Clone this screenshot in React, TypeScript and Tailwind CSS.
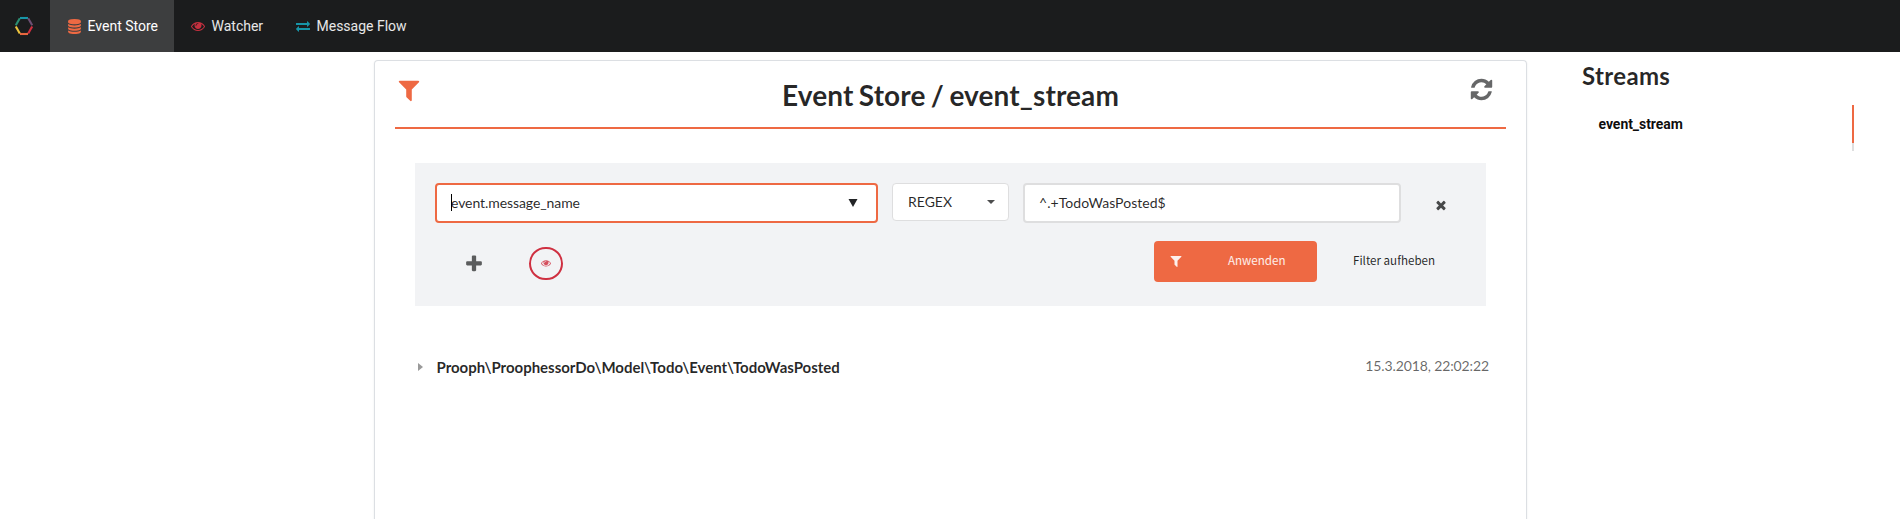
import React from "react";

const PATHS = {
  filter:
    "M1595 295q17 41-14 70l-493 493v742q0 42-39 59-13 5-25 5-27 0-45-19l-256-256q-19-19-19-45v-486l-493-493q-31-29-14-70 17-39 59-39h1280q42 0 59 39z",
  refresh:
    "M1639 1056q0 5-1 7-64 268-268 434.5t-478 166.5q-146 0-282.5-55t-243.5-157l-129 129q-19 19-45 19t-45-19-19-45v-448q0-26 19-45t45-19h448q26 0 45 19t19 45-19 45l-137 137q71 66 161 102t187 36q134 0 250-65t186-179q11-17 53-117 8-23 30-23h192q13 0 22.5 9.5t9.5 22.5zm25-800v448q0 26-19 45t-45 19h-448q-26 0-45-19t-19-45 19-45l138-138q-148-137-349-137-134 0-250 65t-186 179q-11 17-53 117-8 23-30 23h-199q-13 0-22.5-9.5t-9.5-22.5v-7q65-268 270-434.5t480-166.5q146 0 284 55.5t245 156.5l130-129q19-19 45-19t45 19 19 45z",
  plus:
    "M1600 736v192q0 40-28 68t-68 28h-416v416q0 40-28 68t-68 28h-192q-40 0-68-28t-28-68v-416h-416q-40 0-68-28t-28-68v-192q0-40 28-68t68-28h416v-416q0-40 28-68t68-28h192q40 0 68 28t28 68v416h416q40 0 68 28t28 68z",
  times:
    "M1490 1322q0 40-28 68l-136 136q-28 28-68 28t-68-28l-294-294-294 294q-28 28-68 28t-68-28l-136-136q-28-28-28-68t28-68l294-294-294-294q-28-28-28-68t28-68l136-136q28-28 68-28t68 28l294 294 294-294q28-28 68-28t68 28l136 136q28 28 28 68t-28 68l-294 294 294 294q28 28 28 68z",
  eye:
    "M1664 960q-152-236-381-353 61 104 61 225 0 185-131.5 316.5t-316.5 131.5-316.5-131.5-131.5-316.5q0-121 61-225-229 117-381 353 133 205 333.5 326.5t434.5 121.5 434.5-121.5 333.5-326.5zm-720-384q0-20-14-34t-34-14q-125 0-214.5 89.5t-89.5 214.5q0 20 14 34t34 14 34-14 14-34q0-86 61-147t147-61q20 0 34-14t14-34zm848 384q0 34-20 69-140 230-376.5 368.5t-499.5 138.5-499.5-139-376.5-368q-20-35-20-69t20-69q140-229 376.5-368t499.5-139 499.5 139 376.5 368q20 35 20 69z",
  database:
    "M896 768q237 0 443-43t325-127v170q0 69-103 128t-280 93.5-385 34.5-385-34.5-280-93.5-103-128v-170q119 84 325 127t443 43zm0 768q237 0 443-43t325-127v170q0 69-103 128t-280 93.5-385 34.5-385-34.5-280-93.5-103-128v-170q119 84 325 127t443 43zm0-384q237 0 443-43t325-127v170q0 69-103 128t-280 93.5-385 34.5-385-34.5-280-93.5-103-128v-170q119 84 325 127t443 43zm0-1152q208 0 385 34.5t280 93.5 103 128v128q0 69-103 128t-280 93.5-385 34.5-385-34.5-280-93.5-103-128v-128q0-69 103-128t280-93.5 385-34.5z",
  exchange:
    "M1792 1184v192q0 13-9.5 22.5t-22.5 9.5h-1376v192q0 13-9.5 22.5t-22.5 9.5q-12 0-24-10l-319-320q-9-9-9-22 0-14 9-23l320-320q9-9 23-9 13 0 22.5 9.5t9.5 22.5v192h1376q13 0 22.5 9.5t9.5 22.5zm0-544q0 14-9 23l-320 320q-9 9-23 9-13 0-22.5-9.5t-9.5-22.5v-192h-1376q-13 0-22.5-9.5t-9.5-22.5v-192q0-13 9.5-22.5t22.5-9.5h1376v-192q0-14 9-23t23-9q12 0 24 10l319 319q9 9 9 23z",
};

function Icon({ name, className }: { name: keyof typeof PATHS; className: string }) {
  return (
    <svg viewBox="0 0 1792 1792" fill="currentColor" className={`shrink-0 ${className}`}>
      <path d={PATHS[name]} />
    </svg>
  );
}

function Logo() {
  return (
    <svg viewBox="0 0 20 20" className="size-5" fill="none" strokeWidth="2.1">
      <path d="M6 2h8" stroke="#1795a8" />
      <path d="M14.2 2.2l4 7.1" stroke="#6d4f74" />
      <path d="M18.2 10.5l-4 7" stroke="#cf2f40" />
      <path d="M14 18H6" stroke="#e8663f" />
      <path d="M5.8 17.5l-4-7" stroke="#eec53f" />
      <path d="M1.8 9.3l4-7.1" stroke="#2b8f74" />
    </svg>
  );
}

function NavBar() {
  return (
    <nav className="flex h-[52px] bg-[#1b1c1d] font-['Roboto',sans-serif] text-sm text-white/90">
      <div className="flex w-[50px] items-center pl-3.5">
        <Logo />
      </div>
      <a className="flex w-[124px] items-center bg-[#3d3e3f] pl-[17px] text-white">
        <Icon name="database" className="size-[15px] text-[#ee6943]" />
        <span className="ml-[5.5px]">Event Store</span>
      </a>
      <a className="flex w-[105px] items-center pl-[17px]">
        <Icon name="eye" className="size-[14px] text-[#c5303f]" />
        <span className="ml-[6.5px]">Watcher</span>
      </a>
      <a className="flex items-center pl-[17px]">
        <Icon name="exchange" className="size-[14px] text-[#1795a8]" />
        <span className="ml-[6.5px]">Message Flow</span>
      </a>
    </nav>
  );
}

function FilterPanel() {
  return (
    <section className="mx-5 mt-[34px] h-[143px] bg-[#f2f3f5] px-5 pt-5">
      <div className="flex items-start">
        <div className="flex h-10 w-[443px] items-center justify-between rounded border-2 border-[#ee6943] bg-white pb-px pl-3.5 pr-[18px] text-sm leading-[17px] text-black/85">
          <span className="flex items-center">
            <span className="-mr-px h-[17px] w-px bg-black" />
            <span className="tracking-[-0.08px]">event.message_name</span>
          </span>
          <svg viewBox="0 0 10 8" className="h-2 w-[10px]">
            <path d="M0.5 0h9L5 8z" fill="#222426" />
          </svg>
        </div>
        <div className="ml-3.5 flex h-[38px] w-[117px] items-center justify-between rounded border border-[#dededf] bg-white pl-[15px] pr-[13px] text-sm text-black/85">
          <span>REGEX</span>
          <svg viewBox="0 0 8 4" className="h-1 w-2">
            <path d="M0 0h8L4 4z" fill="#4c4d4e" />
          </svg>
        </div>
        <div className="ml-3.5 flex h-10 w-[378px] items-center rounded border-2 border-[#dededf] bg-white pl-3.5 text-sm tracking-[0.05px] text-black/85">
          ^.+TodoWasPosted$
        </div>
        <Icon name="times" className="ml-[32.5px] mt-[15px] size-[14px] text-[#474849]" />
      </div>
      <div className="mt-[18px] flex h-[41px] items-start">
        <Icon name="plus" className="ml-[29px] mt-[13px] size-[20px] text-[#5b5c5d]" />
        <div className="ml-[45px] mt-1.5 flex h-[33px] w-[34px] items-center justify-center rounded-full border-2 border-[#cf3041] pb-0.5">
          <Icon name="eye" className="size-[10px] text-[#d5505e]" />
        </div>
        <button className="ml-[591px] flex h-[41px] w-[163px] items-center rounded bg-[#ee6943] pb-0.5 pl-[15px] text-[11.6px] text-white/90">
          <Icon name="filter" className="size-[14px]" />
          <span className="ml-[45px] font-['Noto_Sans_CJK_SC',sans-serif]">Anwenden</span>
        </button>
        <span className="ml-9 flex h-[39px] items-center font-['Noto_Sans_CJK_SC',sans-serif] text-[11.6px] text-black/85">
          Filter aufheben
        </span>
      </div>
    </section>
  );
}

function EventCard() {
  return (
    <main className="mt-2 h-[459px] w-[1153px] shrink-0 rounded-t border border-b-0 border-[#dcdfe3] px-5 shadow-[0_1px_2px_0_rgba(34,36,38,0.1)]">
      <header className="flex h-[68px] items-start border-b-2 border-[#ee6943] pl-px pr-3">
        <Icon name="filter" className="mt-4 size-[26px] text-[#ee6943]" />
        <h1 className="mt-4 flex-1 pl-[10px] text-center text-[28px] font-bold leading-9 tracking-[0.1px] text-black/85 [word-spacing:-1.5px]">
          Event Store / event_stream
        </h1>
        <Icon name="refresh" className="mt-4 size-[25px] text-[#666768]" />
      </header>
      <FilterPanel />
      <div className="mx-5 mt-[50px] flex h-[22px] items-center">
        <svg viewBox="0 0 5 8" className="ml-[3px] h-2 w-[5px]">
          <path d="M0 0l5 4-5 4z" fill="#9a9a9a" />
        </svg>
        <span className="ml-[13.5px] text-[15px] font-bold tracking-[-0.02px] text-black/85">
          Prooph\ProophessorDo\Model\Todo\Event\TodoWasPosted
        </span>
        <time className="-mr-[3px] mb-0.5 ml-auto text-sm tracking-[-0.12px] text-black/60">15.3.2018, 22:02:22</time>
      </div>
    </main>
  );
}

function Streams() {
  return (
    <aside className="ml-[55px] mt-2 w-[272px]">
      <h2 className="text-2xl font-bold leading-[31px] tracking-[0.35px] text-black/85">Streams</h2>
      <div className="mt-3.5 flex h-[46px] justify-between">
        <a className="ml-[16.5px] mt-[9px] font-['Roboto',sans-serif] text-sm font-bold tracking-[-0.05px] text-black/95">event_stream</a>
        <div className="w-0.5 bg-[#dededf]">
          <div className="h-[38px] bg-[#ee6943]" />
        </div>
      </div>
    </aside>
  );
}

export default function App() {
  return (
    <div className="h-[519px] overflow-hidden bg-white font-['Lato',sans-serif]">
      <NavBar />
      <div className="flex items-start pl-[374px]">
        <EventCard />
        <Streams />
      </div>
    </div>
  );
}
